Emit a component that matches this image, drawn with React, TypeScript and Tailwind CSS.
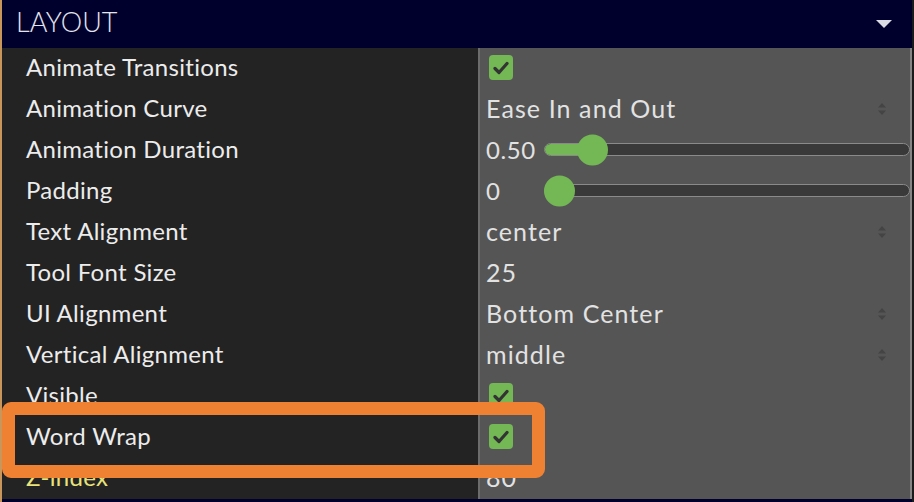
import React from "react";

type Row =
  | { label: string; kind: "check" }
  | { label: string; kind: "select"; value: string }
  | { label: string; kind: "slider"; value: string; pct: number }
  | { label: string; kind: "text"; value: string; highlight?: boolean };

const rows: Row[] = [
  { label: "Animate Transitions", kind: "check" },
  { label: "Animation Curve", kind: "select", value: "Ease In and Out" },
  { label: "Animation Duration", kind: "slider", value: "0.50", pct: 0.1 },
  { label: "Padding", kind: "slider", value: "0", pct: 0 },
  { label: "Text Alignment", kind: "select", value: "center" },
  { label: "Tool Font Size", kind: "text", value: "25" },
  { label: "UI Alignment", kind: "select", value: "Bottom Center" },
  { label: "Vertical Alignment", kind: "select", value: "middle" },
  { label: "Visible", kind: "check" },
  { label: "Word Wrap", kind: "check" },
  { label: "Z-index", kind: "text", value: "80", highlight: true },
];

const Checkbox = () => (
  <div className="ml-[3px] w-[24px] h-[25px] rounded-[4px] bg-[#74b856] flex items-center justify-center">
    <svg width="16" height="14" viewBox="0 0 16 14" fill="none">
      <path
        d="M2 7.5 L6 11.5 L14 2.5"
        stroke="#333333"
        strokeWidth="3.2"
        strokeLinecap="round"
        strokeLinejoin="round"
      />
    </svg>
  </div>
);

const SelectArrows = () => (
  <svg width="8" height="12" viewBox="0 0 8 12" className="mr-[24px]">
    <path d="M4 0 L8 4.5 L0 4.5 Z" fill="#444444" />
    <path d="M0 7.5 L8 7.5 L4 12 Z" fill="#444444" />
  </svg>
);

const Slider = ({ value, pct }: { value: string; pct: number }) => (
  <div className="flex items-center w-full">
    <span className="w-[58px] shrink-0 tracking-[0.6px]">{value}</span>
    <div className="relative flex-1 h-[13px] rounded-full bg-[#393939] border-[1.5px] border-[#8a8a8a]">
      <div
        className="absolute left-0 top-0 bottom-0 rounded-full bg-[#74b856]"
        style={{ width: `calc(${pct * 100}% - ${pct * 31}px + 15px)` }}
      />
      <div
        className="absolute top-1/2 -translate-y-1/2 w-[31px] h-[31px] rounded-full bg-[#74b856]"
        style={{ left: `calc(${pct * 100}% - ${pct * 31}px - 1px)` }}
      />
    </div>
  </div>
);

const Value = ({ row }: { row: Row }) => {
  if (row.kind === "check") return <Checkbox />;
  if (row.kind === "select")
    return (
      <div className="flex items-center justify-between w-full">
        <span className="text-[25px] tracking-[1.1px]">{row.value}</span>
        <SelectArrows />
      </div>
    );
  if (row.kind === "slider") return <Slider value={row.value} pct={row.pct} />;
  return <span className="text-[25px] tracking-[1.1px]">{row.value}</span>;
};

export default function App() {
  return (
    <div className="relative w-[914px] h-[502px] overflow-hidden bg-[#00002c] border-l-2 border-l-[#c8955a] border-r-2 border-r-[#1b1b1b] font-['Lato',sans-serif]">
      <div className="h-[48px] flex items-center justify-between pl-[14px] pr-[20px]">
        <span className="text-[27px] font-light text-[#e4e4ec] pb-[3px]">
          LAYOUT
        </span>
        <svg width="16" height="8" viewBox="0 0 16 8">
          <path d="M0 0 L16 0 L8 8 Z" fill="#dcdce4" />
        </svg>
      </div>

      <div className="flex h-[451px] text-[24px]">
        <div className="w-[476px] bg-[#232323] pl-[24px] flex flex-col">
          {rows.map((r) => (
            <div
              key={r.label}
              className={`h-[41px] flex items-center pb-[3px] tracking-[0.3px] ${
                r.kind === "text" && r.highlight ? "text-[#e8e37a]" : "text-[#ececec]"
              }`}
            >
              {r.label}
            </div>
          ))}
        </div>
        <div className="flex-1 bg-[#555555] border-l-2 border-l-[#6c6c6c] border-r-2 border-r-[#858585] pl-[6px] flex flex-col text-[#e2e2e2]">
          {rows.map((r) => (
            <div key={r.label} className="h-[41px] flex items-center pb-[2px]">
              <Value row={r} />
            </div>
          ))}
        </div>
      </div>

      <div className="absolute left-0 top-[402px] w-[543px] h-[76px] border-[13px] border-[#ee8232] rounded-[9px]" />
    </div>
  );
}
